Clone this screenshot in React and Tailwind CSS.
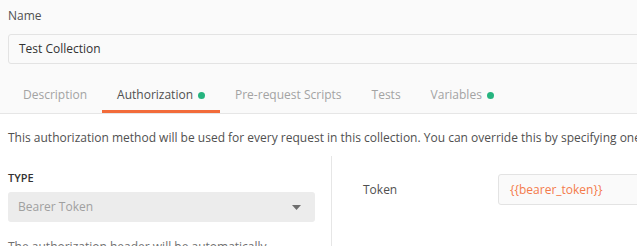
export default function App() {
  const font = { fontFamily: '"Open Sans", "Noto Sans", sans-serif' };
  const tabs = [
    { name: "Description" },
    { name: "Authorization", active: true, dot: true },
    { name: "Pre-request Scripts" },
    { name: "Tests" },
    { name: "Variables", dot: true },
  ];
  return (
    <div className="w-[637px] h-[246px] overflow-hidden bg-white" style={font}>
      <div className="bg-[#fafafa] border-b border-[#e6e6e6] pl-2">
        <div className="pt-[7px] h-[34px] text-[12px] leading-[18px] text-[#505050]">Name</div>
        <div className="w-[660px] h-[30px] border border-[#e3e3e3] rounded-[3px] bg-[#fafafa] flex items-center pl-[10px] text-[12px] text-[#333]">
          Test Collection
        </div>
        <div className="flex mt-[16px]">
          {tabs.map((t) => (
            <div
              key={t.name}
              className={
                "h-[33px] px-[15px] flex items-center text-[12px] border-b-[3px] " +
                (t.active ? "border-[#f26b3a] text-[#505050]" : "border-transparent text-[#a3a3a3]")
              }
            >
              <span>{t.name}</span>
              {t.dot && <span className="ml-[5px] w-[7px] h-[7px] rounded-full bg-[#26b47f]" />}
            </div>
          ))}
        </div>
      </div>
      <div className="pl-2 pt-[15px] text-[12px] leading-[17px] text-[#505050] whitespace-nowrap">
        This authorization method will be used for every request in this collection. You can override this by specifying one in the request.
      </div>
      <div className="flex mt-[10px]">
        <div className="w-[331px] shrink-0 pl-2 pr-4 pt-[14px]">
          <div className="text-[11px] leading-[16px] font-semibold text-[#333]">TYPE</div>
          <div className="mt-[6px] h-[30px] rounded-[3px] bg-[#ececec] flex items-center justify-between pl-[10px] pr-[14px] text-[12px] text-[#a0a0a0]">
            <span>Bearer Token</span>
            <svg width="9" height="5" viewBox="0 0 9 5"><path d="M0 0h9L4.5 5z" fill="#6e6e6e" /></svg>
          </div>
          <div className="mt-[16px] text-[12px] leading-[17px] text-[#707070]">
            The authorization header will be automatically generated when you send the request.
          </div>
        </div>
        <div className="flex-1 border-l border-[#e6e6e6] h-[120px] pt-[18px] pl-[31px] flex items-start">
          <div className="w-[135px] h-[31px] flex items-center text-[12px] text-[#505050]">Token</div>
          <div className="w-[200px] h-[31px] border border-[#e3e3e3] rounded-[3px] bg-[#fafafa] flex items-center pl-[11px] text-[12px] text-[#f47b4b] whitespace-nowrap">
            {"{{bearer_token}}"}
          </div>
        </div>
      </div>
    </div>
  );
}
